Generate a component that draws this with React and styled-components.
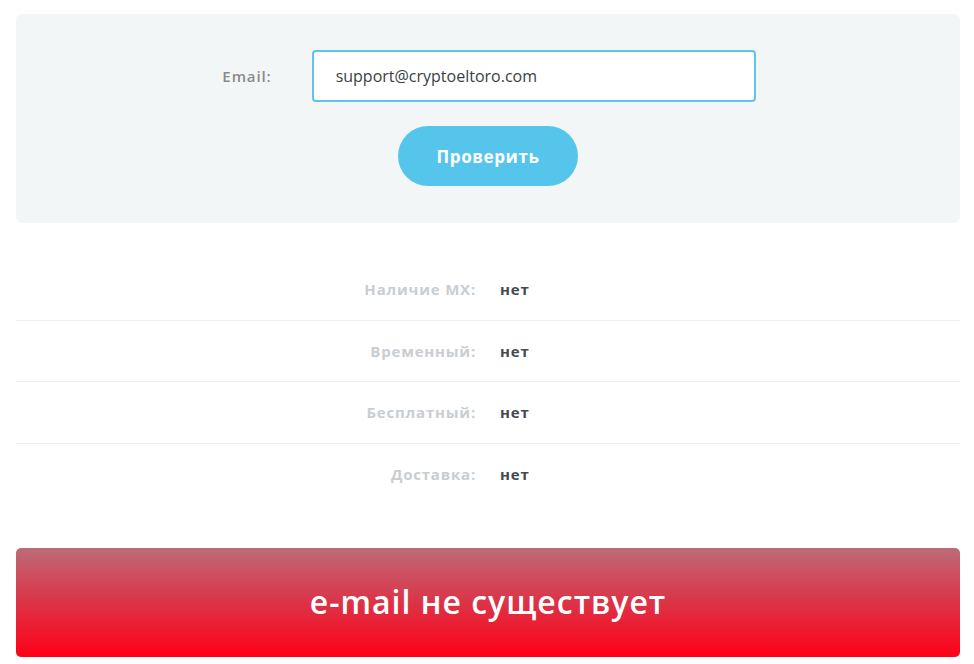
import React, { useEffect, useRef } from 'react';
import styled, { createGlobalStyle } from 'styled-components';

const GlobalStyle = createGlobalStyle`
    body {
        margin: 0;
        background: #fff;
        font-family: "Open Sans", "Noto Sans", sans-serif;
    }
`;

const Page = styled.div`
    padding: 14px 14px 0 16px;
`;

const CheckPanel = styled.div`
    background-color: #f3f6f7;
    border-radius: 6px;
    padding: 36px 0 37px;
    display: flex;
    flex-direction: column;
    align-items: center;
    gap: 24px;
`;

const EmailRow = styled.div`
    display: flex;
    align-items: center;
    gap: 40px;
    margin-left: 2px;

    label {
        font-size: 15px;
        font-weight: 600;
        letter-spacing: 0.9px;
        color: #8a8a8a;
    }
`;

const EmailInput = styled.input`
    box-sizing: border-box;
    width: 444px;
    height: 52px;
    border: 2px solid #5ec4ea;
    border-radius: 4px;
    background: #fff;
    padding: 0 22px;
    font-family: "Open Sans", "Noto Sans", sans-serif;
    font-size: 16px;
    color: #3a3f45;
    caret-color: #333;
    outline: none;
`;

const CheckButton = styled.button`
    width: 180px;
    height: 60px;
    border: none;
    border-radius: 30px;
    background-color: #56c5ec;
    color: #fff;
    font-family: "Open Sans", "Noto Sans", sans-serif;
    font-size: 17px;
    font-weight: 700;
    letter-spacing: 0.6px;
    cursor: pointer;
`;

const Results = styled.div`
    margin: 36px 0 44px;
`;

const ResultRow = styled.div`
    display: grid;
    grid-template-columns: 1fr 1fr;
    align-items: center;
    height: 60.5px;
    border-bottom: 1px solid #eceef0;
    font-size: 15px;
    font-weight: 700;
    letter-spacing: 0.8px;

    &:last-child {
        border-bottom: none;
    }

    span:first-child {
        text-align: right;
        padding-right: 12px;
        color: #c9cdd2;
    }

    span:last-child {
        padding-left: 12px;
        color: #444a52;
    }
`;

const StatusBanner = styled.div`
    height: 109px;
    border-radius: 5px;
    background: linear-gradient(to bottom, #bd6b78 0%, #dc3347 50%, #ff0016 100%);
    display: flex;
    align-items: center;
    justify-content: center;
    padding-bottom: 3px;
    box-sizing: border-box;
    color: #fff;
    font-size: 32px;
    font-weight: 600;
    letter-spacing: 1px;
`;

const results = [
    ['Наличие MX:', 'нет'],
    ['Временный:', 'нет'],
    ['Бесплатный:', 'нет'],
    ['Доставка:', 'нет'],
];

export default function App() {
    const inputRef = useRef(null);

    useEffect(() => {
        if (inputRef.current) {
            inputRef.current.focus();
            inputRef.current.setSelectionRange(0, 0);
        }
    }, []);

    return (
        <>
            <GlobalStyle />
            <Page>
                <CheckPanel>
                    <EmailRow>
                        <label htmlFor="email">Email:</label>
                        <EmailInput ref={inputRef} id="email" defaultValue="support@cryptoeltoro.com" />
                    </EmailRow>
                    <CheckButton>Проверить</CheckButton>
                </CheckPanel>
                <Results>
                    {results.map(([name, value]) => (
                        <ResultRow key={name}>
                            <span>{name}</span>
                            <span>{value}</span>
                        </ResultRow>
                    ))}
                </Results>
                <StatusBanner>e-mail не существует</StatusBanner>
            </Page>
        </>
    );
}
